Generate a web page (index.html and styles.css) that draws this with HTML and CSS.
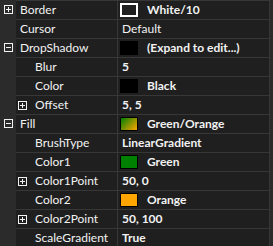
FILE: index.html
```html
<!DOCTYPE html>
<html lang="en">
<head>
    <meta charset="UTF-8">
    <title>Properties</title>
    <link rel="stylesheet" href="styles.css">
</head>
<body>
    <div class="grid">
        <div class="row">
            <div class="gutter"><span class="exp plus"></span></div>
            <div class="name">Border</div>
            <div class="value"><span class="swatch sw-border"></span><b>White/10</b></div>
        </div>
        <div class="row">
            <div class="gutter"></div>
            <div class="name">Cursor</div>
            <div class="value plain">Default</div>
        </div>
        <div class="row">
            <div class="gutter"><span class="exp minus"></span></div>
            <div class="name">DropShadow</div>
            <div class="value"><span class="swatch sw-black"></span><b>(Expand to edit...)</b></div>
        </div>
        <div class="row">
            <div class="gutter"></div>
            <div class="name child">Blur</div>
            <div class="value plain"><b>5</b></div>
        </div>
        <div class="row">
            <div class="gutter"></div>
            <div class="name child">Color</div>
            <div class="value"><span class="swatch sw-black"></span><b>Black</b></div>
        </div>
        <div class="row">
            <div class="gutter"></div>
            <div class="name child has-exp"><span class="exp plus"></span>Offset</div>
            <div class="value plain"><b>5, 5</b></div>
        </div>
        <div class="row">
            <div class="gutter"><span class="exp minus"></span></div>
            <div class="name">Fill</div>
            <div class="value"><span class="swatch sw-grad"></span><b>Green/Orange</b></div>
        </div>
        <div class="row">
            <div class="gutter"></div>
            <div class="name child">BrushType</div>
            <div class="value plain"><b>LinearGradient</b></div>
        </div>
        <div class="row">
            <div class="gutter"></div>
            <div class="name child">Color1</div>
            <div class="value"><span class="swatch sw-green"></span><b>Green</b></div>
        </div>
        <div class="row">
            <div class="gutter"></div>
            <div class="name child has-exp"><span class="exp plus"></span>Color1Point</div>
            <div class="value plain"><b>50, 0</b></div>
        </div>
        <div class="row">
            <div class="gutter"></div>
            <div class="name child">Color2</div>
            <div class="value"><span class="swatch sw-orange"></span><b>Orange</b></div>
        </div>
        <div class="row">
            <div class="gutter"></div>
            <div class="name child has-exp"><span class="exp plus"></span>Color2Point</div>
            <div class="value plain"><b>50, 100</b></div>
        </div>
        <div class="row">
            <div class="gutter"></div>
            <div class="name child">ScaleGradient</div>
            <div class="value plain"><b>True</b></div>
        </div>
    </div>
</body>
</html>
```

FILE: styles.css
```css
*{
    margin: 0;
    padding: 0;
    box-sizing: border-box;
}

body{
    background-color: #2b2b2b;
    font-family: Lato, "Liberation Sans", sans-serif;
    font-size: 12px;
    color: #f2f2f2;
    overflow: hidden;
}

.grid{
    width: 270px;
    display: flex;
    flex-direction: column;
}

.row{
    display: grid;
    grid-template-columns: 16px 101px 153px;
    height: 19px;
}

.gutter{
    position: relative;
    background-color: #2b2b2b;
}

.name,
.value{
    display: flex;
    align-items: center;
    background-color: #1f1f1f;
    border-top: 1px solid #373737;
    line-height: 18px;
    white-space: nowrap;
    overflow: hidden;
}

.name{
    padding-left: 4px;
}

.name.child{
    padding-left: 19px;
}

.name.has-exp{
    padding-left: 2px;
}

.value{
    border-left: 1px solid #373737;
    border-right: 1px solid #373737;
    padding-left: 2px;
}

.value.plain{
    padding-left: 4px;
}

.value b{
    font-weight: bold;
}

/* expander boxes */
.exp{
    display: inline-block;
    width: 9px;
    height: 9px;
    border: 1px solid #f2f2f2;
    position: relative;
    flex: none;
}

.gutter .exp{
    position: absolute;
    left: 4px;
    top: 5px;
}

.name .exp{
    margin-right: 8px;
}

.exp::before,
.exp.plus::after{
    content: "";
    position: absolute;
    background-color: #f2f2f2;
}

.exp::before{
    left: 1px;
    top: 3px;
    width: 5px;
    height: 1px;
}

.exp.plus::after{
    left: 3px;
    top: 1px;
    width: 1px;
    height: 5px;
}

/* colour swatches */
.swatch{
    display: inline-block;
    width: 18px;
    height: 14px;
    margin-right: 9px;
    border: 1px solid #000;
    flex: none;
}

.sw-border{
    border: 2px solid #ffffff;
    background-color: #1f1f1f;
}

.sw-black{
    background-color: #000;
}

.sw-grad{
    background: linear-gradient(135deg, #008000, #ffa500);
}

.sw-green{
    background-color: #008000;
}

.sw-orange{
    background-color: #ffa500;
}
```
